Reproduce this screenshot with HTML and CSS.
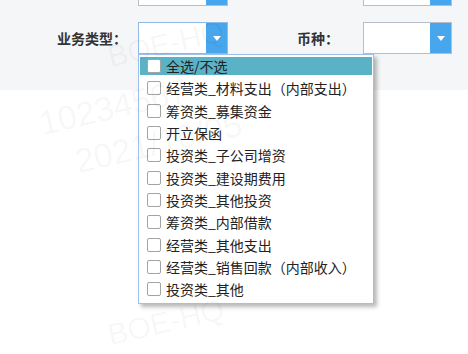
FILE: index.html
```html
<!DOCTYPE html>
<html>
<head>
  <title>查询条件</title>
  <link rel="stylesheet" href="styles.css">
</head>
<body>
  <div class="page">
    <!-- Filter area -->
    <div class="filters">
      <div class="filter-row">
        <div class="filter-label"></div>
        <div class="select"><span class="select-btn"><i class="arrow"></i></span></div>
        <div class="filter-label"></div>
        <div class="select"><span class="select-btn"><i class="arrow"></i></span></div>
      </div>
      <div class="filter-row">
        <div class="filter-label">业务类型：</div>
        <div class="select-wrap">
          <div class="select focused"><span class="select-btn"><i class="arrow"></i></span></div>

          <!-- Multi select dropdown -->
          <ul class="dropdown">
            <li class="option active"><span class="check"></span>全选/不选</li>
            <li class="option"><span class="check"></span>经营类_材料支出（内部支出）</li>
            <li class="option"><span class="check"></span>筹资类_募集资金</li>
            <li class="option"><span class="check"></span>开立保函</li>
            <li class="option"><span class="check"></span>投资类_子公司增资</li>
            <li class="option"><span class="check"></span>投资类_建设期费用</li>
            <li class="option"><span class="check"></span>投资类_其他投资</li>
            <li class="option"><span class="check"></span>筹资类_内部借款</li>
            <li class="option"><span class="check"></span>经营类_其他支出</li>
            <li class="option"><span class="check"></span>经营类_销售回款（内部收入）</li>
            <li class="option"><span class="check"></span>投资类_其他</li>
          </ul>
        </div>
        <div class="filter-label wide">币种：</div>
        <div class="select"><span class="select-btn"><i class="arrow"></i></span></div>
      </div>
    </div>

    <div class="content"></div>

    <!-- Watermark layer -->
    <div class="watermark">
      <span class="wm wm-name" style="left: 112px; top: 40px;">BOE-HQ</span>
      <span class="wm wm-id" style="left: 44px; top: 104px;">10234567</span>
      <span class="wm wm-date" style="left: 80px; top: 142px;">2021/10/05</span>
      <span class="wm wm-name" style="left: 112px; top: 318px;">BOE-HQ</span>
    </div>
  </div>
</body>
</html>
```

FILE: styles.css
```css
/* Page */
body {
  margin: 0;
  font-family: "Noto Sans CJK SC", "Liberation Sans", sans-serif;
  background-color: #fff;
  color: #222;
}

.page {
  position: relative;
  height: 354px;
  overflow: hidden;
}

/* Filter area */
.filters {
  margin-top: -26px;
  padding-bottom: 36px;
  background-color: #f5f6f8;
  display: flex;
  flex-direction: column;
  gap: 16px;
}

.filter-row {
  display: grid;
  grid-template-columns: 138px 90px 135px 89px;
  align-items: center;
  height: 32px;
}

.filter-label {
  padding-right: 11px;
  text-align: right;
  font-size: 14px;
  font-weight: bold;
  color: #333;
  line-height: 32px;
}

.filter-label.wide {
  padding-right: 24px;
}

/* Select box */
.select-wrap {
  position: relative;
}

.select {
  display: flex;
  height: 32px;
  box-sizing: border-box;
  border: 1px solid #b8bdcc;
  background-color: #fff;
}

.select.focused {
  border-color: #93b9e6;
}

.select-btn {
  display: flex;
  align-items: center;
  justify-content: center;
  width: 21px;
  margin-left: auto;
  background-color: #47a6ec;
}

.arrow {
  width: 0;
  height: 0;
  border-left: 4px solid transparent;
  border-right: 4px solid transparent;
  border-top: 5px solid #fff;
}

/* Dropdown list */
.dropdown {
  position: absolute;
  top: 100%;
  left: 0;
  z-index: 2;
  width: 236px;
  box-sizing: border-box;
  margin: 0;
  padding: 0 0 3px;
  list-style: none;
  display: flex;
  flex-direction: column;
  background-color: #fff;
  border: 1px solid #9cc1ee;
  box-shadow: 3px 3px 4px rgba(0, 0, 0, 0.28);
}

.option {
  display: flex;
  align-items: center;
  gap: 5px;
  height: 18.3px;
  margin: 2px 1px;
  padding-left: 7px;
  font-size: 14px;
  line-height: 18px;
  white-space: nowrap;
}

.option.active {
  background-color: #5ab2c7;
}

.check {
  width: 14px;
  height: 14px;
  box-sizing: border-box;
  border: 1px solid #a3a3a3;
  border-radius: 2px;
  background-color: #fff;
}

/* Watermark */
.watermark {
  position: absolute;
  inset: 0;
  z-index: 5;
  pointer-events: none;
}

.wm {
  position: absolute;
  font-family: "Liberation Sans", sans-serif;
  color: rgba(0, 0, 0, 0.045);
  white-space: nowrap;
  transform-origin: left bottom;
  transform: rotate(-13deg);
}

.wm-name {
  font-size: 30px;
}

.wm-id,
.wm-date {
  font-size: 34px;
}
```
